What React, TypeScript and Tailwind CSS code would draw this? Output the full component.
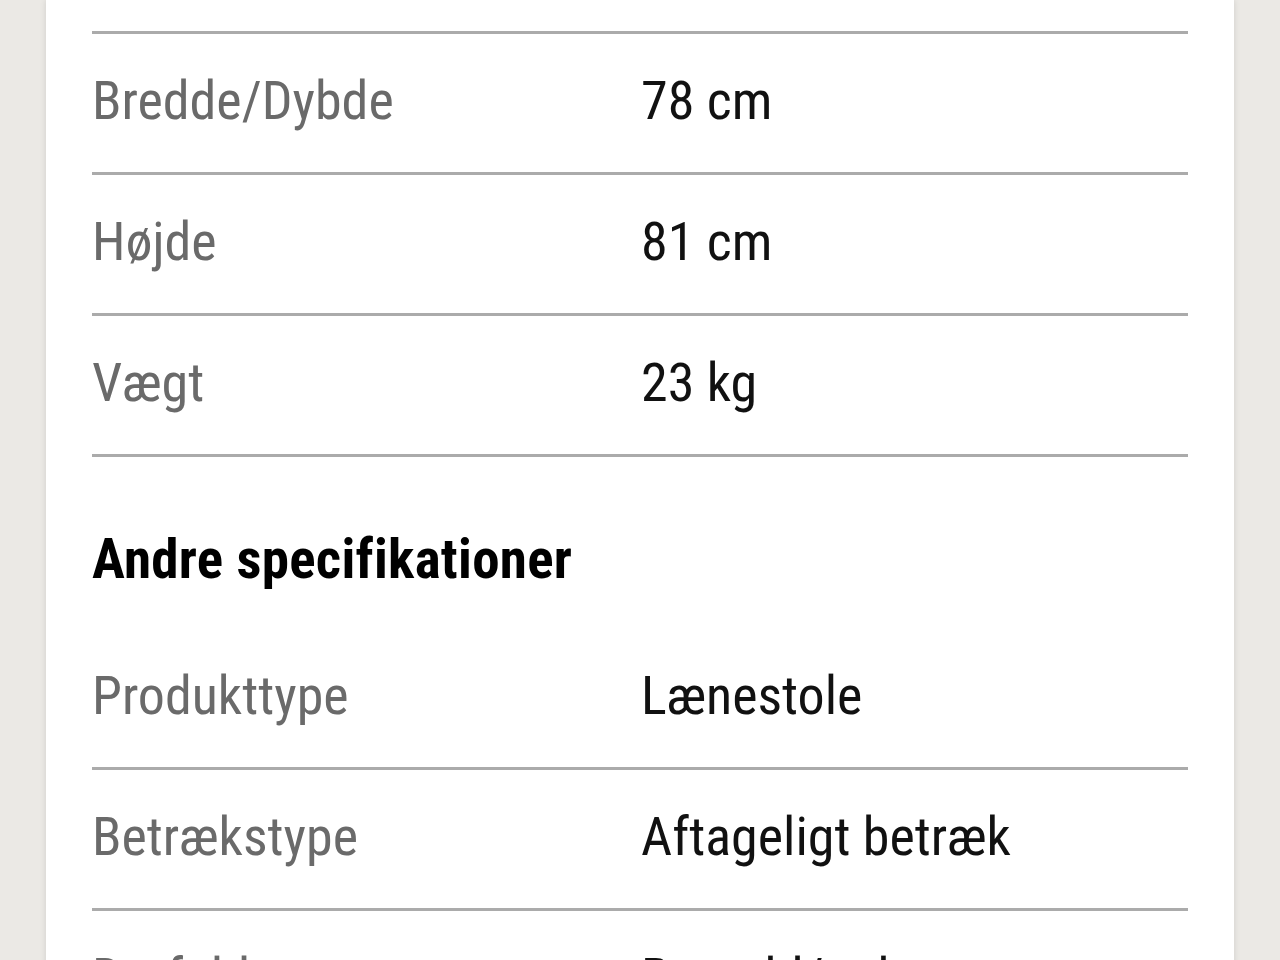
const font = {
  fontFamily: '"Roboto Condensed", "DejaVu Sans Condensed", "Liberation Sans", sans-serif',
};

const dimensions = [
  { label: "Bredde/Dybde", value: "78 cm" },
  { label: "Højde", value: "81 cm" },
  { label: "Vægt", value: "23 kg" },
];

const otherSpecs = [
  { label: "Produkttype", value: "Lænestole" },
  { label: "Betrækstype", value: "Aftageligt betræk" },
  { label: "Dørfolder", value: "Bomuld/polyester" },
];

const Divider = () => <div className="h-[3px] bg-[#ababab]"></div>;

const SpecRow = ({ label, value }: { label: string; value: string }) => (
  <div className="flex h-[138px] items-center pb-1 text-[54px] leading-none">
    <div className="w-[549px] shrink-0 text-[#6a6a6a]">{label}</div>
    <div className="text-[#111111]">{value}</div>
  </div>
);

export default function App() {
  return (
    <div className="h-[960px] overflow-hidden bg-[#ebe9e5] px-[46px]" style={font}>
      <div className="min-h-full bg-white px-[46px] pt-[31px] shadow-[0_0_6px_rgba(0,0,0,0.12)]">
        <Divider />
        {dimensions.map((row) => (
          <div key={row.label}>
            <SpecRow label={row.label} value={row.value} />
            <Divider />
          </div>
        ))}

        {/* Andre specifikationer */}
        <div className="flex h-[172px] items-center pt-[32px]">
          <h2 className="text-[55px] font-bold leading-none tracking-[0.3px] text-black">
            Andre specifikationer
          </h2>
        </div>

        {otherSpecs.map((row) => (
          <div key={row.label}>
            <SpecRow label={row.label} value={row.value} />
            <Divider />
          </div>
        ))}
      </div>
    </div>
  );
}
